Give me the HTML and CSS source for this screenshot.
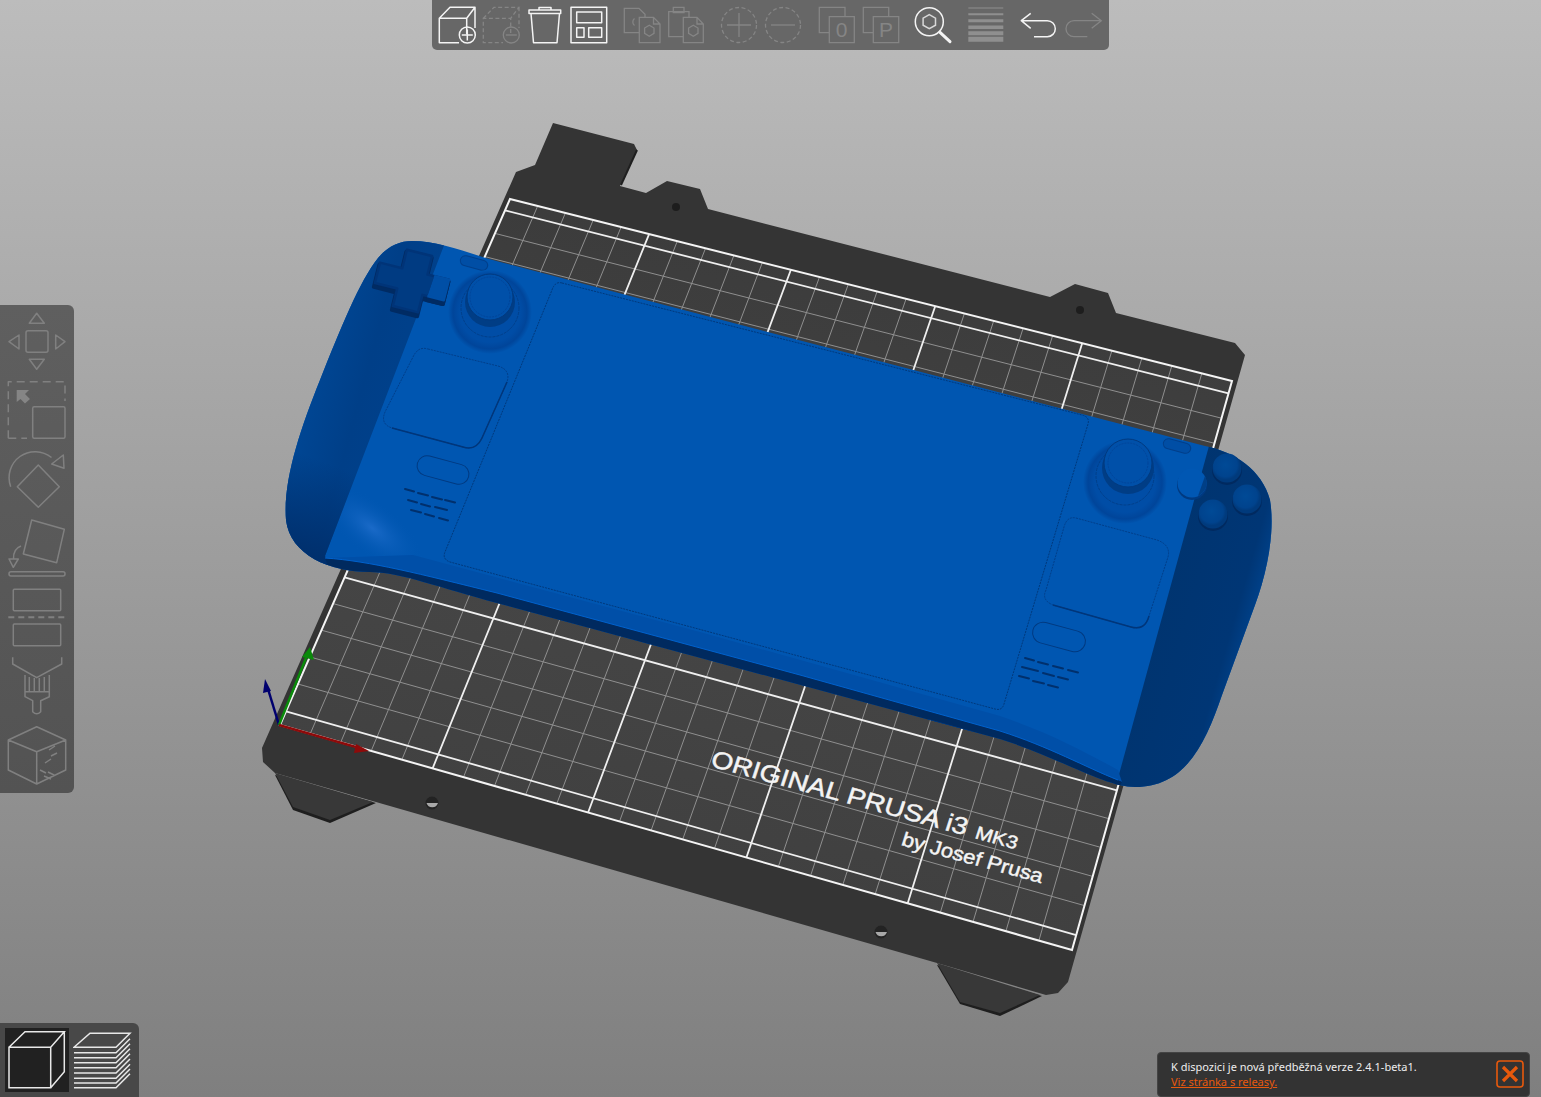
FILE: index.html
```html
<!DOCTYPE html>
<html lang="cs">
<head>
<meta charset="utf-8">
<title>PrusaSlicer</title>
<link rel="stylesheet" href="styles.css">
</head>
<body>
<main class="app">
  <svg class="scene" viewBox="0 0 1541 1097" width="1541" height="1097">
    <defs>
      <clipPath id="bodyClip"><path d="M412 241C440 241 470 254 500 262L1205 446C1235 452 1262 470 1270 500C1275 530 1268 570 1255 605L1222 695C1205 745 1185 787 1135 787C1105 787 1060 758 1000 739L697 657L497 603C440 588 400 572 370 572C330 572 290 555 286 520C283 480 300 430 320 380C340 330 360 280 378 258C388 246 400 241 412 241Z"/></clipPath>
      <clipPath id="faceClip"><polygon points="448,235 1212,435 1112,800 325,600"/></clipPath>
      <linearGradient id="gridFill" gradientUnits="userSpaceOnUse" x1="800" y1="250" x2="700" y2="880">
        <stop offset="0" stop-color="#3c3c3c"/><stop offset="0.6" stop-color="#454545"/><stop offset="1" stop-color="#404040"/>
      </linearGradient>
      <linearGradient id="leftGrip" gradientUnits="userSpaceOnUse" x1="300" y1="400" x2="410" y2="430">
        <stop offset="0" stop-color="#004795"/><stop offset="0.5" stop-color="#003f88"/><stop offset="1" stop-color="#00418c"/>
      </linearGradient>
      <linearGradient id="leftShade" gradientUnits="userSpaceOnUse" x1="345" y1="470" x2="310" y2="560">
        <stop offset="0" stop-color="#002f6c" stop-opacity="0"/><stop offset="1" stop-color="#002f6c"/>
      </linearGradient>
      <linearGradient id="rightGrip" gradientUnits="userSpaceOnUse" x1="1150" y1="590" x2="1272" y2="625">
        <stop offset="0" stop-color="#00346f"/><stop offset="0.7" stop-color="#003675"/><stop offset="1" stop-color="#004c9e"/>
      </linearGradient>
      <radialGradient id="glow">
        <stop offset="0" stop-color="#1a6ac8"/><stop offset="1" stop-color="#0056b1" stop-opacity="0"/>
      </radialGradient>
      <radialGradient id="stickBase">
        <stop offset="0" stop-color="#004da6"/><stop offset="0.72" stop-color="#004da6"/><stop offset="0.88" stop-color="#00459a"/><stop offset="1" stop-color="#0056b1"/>
      </radialGradient>
      <radialGradient id="btnFill" cx="0.45" cy="0.4">
        <stop offset="0" stop-color="#004a96"/><stop offset="0.8" stop-color="#00438d"/><stop offset="1" stop-color="#003a7c"/>
      </radialGradient>
    </defs>

    <!-- print bed -->
    <polygon class="bed-foot-edge" points="293,810 330,823 376,803 275,775"/>
    <polygon class="bed-foot-edge" points="960,1004 1000,1016 1042,996 937,965"/>
    <polygon class="bed-foot" points="275,773 293,807 330,820 373,802"/>
    <polygon class="bed-foot" points="937,963 960,1002 1000,1013 1040,995"/>
    <polygon class="bed" points="553,123 634,144 637,150 620,186 646,193 667,181 700,189 708,209 1050,297 1075,284 1108,293 1116,313 1235,343 1245,355 1068,982 1058,993 1046,995 937,963 275,773 263,762 262,748 516,172 535,165"/>
    <line class="edge-shadow" x1="637" y1="150" x2="621" y2="185"/>
    <circle class="hole-dark" cx="676" cy="207" r="4"/>
    <circle class="hole-dark" cx="1080" cy="310" r="4"/>
    <circle class="hole-ring" cx="432" cy="803" r="6.5"/><path class="hole-in" d="M426.500 803A6 6 0 0 0 438 803Z"/>
    <circle class="hole-ring" cx="881" cy="932" r="6.500"/><path class="hole-in" d="M875.500 932A6 6 0 0 0 887 932Z"/>

    <polygon class="grid-fill" points="510,199 1232,381 1072,950 280,725"/>
    <path class="grid-thin" d="M537.700 206L310.300 733.600M565.400 213L340.700 742.300M593.200 220L371.200 750.900M621.100 227L401.900 759.600M677.300 241.200L463.500 777.100M705.500 248.300L494.500 785.900M733.900 255.400L525.600 794.800M762.300 262.600L556.800 803.600M819.500 277L619.500 821.500M848.300 284.300L651.100 830.400M877.100 291.500L682.700 839.400M906.100 298.800L714.500 848.400M964.400 313.500L778.400 866.600M993.700 320.900L810.600 875.700M1023.100 328.300L842.800 884.900M1052.600 335.800L875.200 894.100M1111.900 350.700L940.300 912.600M1141.800 358.300L973 921.900M1171.800 365.800L1005.900 931.200M1201.800 373.400L1038.900 940.600"/>
    <path class="grid-thin" d="M297.900 684L1084.500 905.600M309.800 656.900L1092.700 876.400M321.500 630.200L1100.800 847.400M333.100 603.600L1108.900 818.700M356 551.300L1124.800 762.100M367.200 525.500L1132.700 734.200M378.400 499.900L1140.500 706.500M389.500 474.600L1148.200 679.100M411.400 424.600L1163.400 625.100M422.100 399.900L1170.900 598.400M432.800 375.500L1178.300 572M443.400 351.300L1185.700 545.700M464.300 303.500L1200.200 494.100M474.600 279.900L1207.400 468.500M484.800 256.600L1214.500 443.300M495 233.400L1221.500 418.200"/>
    <path class="grid-thick" d="M649.100 234.100L432.600 768.400M790.900 269.800L588.100 812.500M935.200 306.200L746.400 857.500M1082.200 343.200L907.700 903.300M286 711.300L1076.200 935.100M344.600 577.400L1116.900 790.300M400.500 449.500L1155.800 651.900M453.900 327.300L1193 519.800M505 210.400L1228.500 393.300"/>
    <polygon class="grid-border" points="510,199 1232,381 1072,950 280,725"/>

    <text class="bed-label" transform="matrix(.965 .262 -.27 .82 709.500 766)" font-size="28">ORIGINAL PRUSA i3</text>
    <text class="bed-label" transform="matrix(.965 .262 -.27 .82 974 838)" font-size="21">MK3</text>
    <text class="bed-label" transform="matrix(.965 .262 -.27 .86 900.500 845)" font-size="22">by Josef Prusa</text>

    <!-- axes -->
    <g class="axis axis-z"><line x1="279" y1="725" x2="268" y2="689"/><polygon points="265,679 271,691 263,693"/></g>
    <g class="axis axis-y"><line x1="279" y1="725" x2="306" y2="658"/><polygon points="310,647 314,660 302,657"/></g>
    <g class="axis axis-x"><line x1="279" y1="725" x2="356" y2="747"/><polygon points="369,751 354,753 356,744"/></g>

    <!-- handheld console -->
    <g clip-path="url(#bodyClip)">
      <rect class="face" x="270" y="230" width="1020" height="570"/>
      <ellipse class="face-glow" cx="372" cy="528" rx="62" ry="26" transform="rotate(38 372 528)"/>
      <polygon class="grip-left" points="448,235 325,556 340,600 270,600 270,235"/>
      <polygon class="grip-shade" points="448,235 325,556 340,600 270,600 270,235"/>
      <polygon class="grip-right" points="1212,435 1112,800 1290,800 1290,435"/>
      <path class="rim" d="M413 555L700 632L1000 716C1050 733 1085 752 1118 770L1122 782L1000 731L497 593C440 578 380 562 325 558Z"/>
      <path class="rim-dark" d="M325 558C370 561 420 574 497 593L800 675L1000 731C1050 747 1085 767 1122 782L1112 800L340 600Z"/>
      <path class="rim-line" d="M325 558C370 561 420 574 497 593L800 675L1000 731C1050 747 1085 767 1118 780"/>
      <path class="usb" d="M928 719L972 731L970 735L926 723Z"/>
    </g>
    <path class="screen" d="M562 283L1082 415Q1090 417 1088 424L1004 704Q1002 711 995 709L450 562Q442 559 445 552L552 290Q555 281 562 283Z"/>

    <g transform="translate(412 283) rotate(14)">
      <path class="dpad-shadow" d="M-13 -29H13V-10H35V13H13V31H-13V13H-36V-10H-13Z"/>
      <path class="dpad" d="M-13 -31H13V-12H35V9H13V27H-13V9H-36V-12H-13Z"/>
    </g>
    <g clip-path="url(#faceClip)">
      <g transform="translate(412 283) rotate(14)">
        <path class="dpad-shadow" d="M-13 -29H13V-10H35V13H13V31H-13V13H-36V-10H-13Z"/>
        <path class="dpad-lit" d="M-13 -31H13V-12H35V9H13V27H-13V9H-36V-12H-13Z"/>
      </g>
    </g>

    <rect class="pill-small" x="-14" y="-5" width="28" height="10" rx="5" transform="translate(474 263) rotate(15)"/>
    <rect class="pill-small" x="-14" y="-5" width="28" height="10" rx="5" transform="translate(1177 446) rotate(15)"/>

    <circle cx="490" cy="312" r="42" fill="url(#stickBase)"/>
    <circle class="stick-ring" cx="490" cy="308" r="29"/>
    <circle class="stick-neck" cx="490" cy="302" r="25"/>
    <circle class="stick-cap" cx="490" cy="297" r="23"/>
    <circle class="stick-inner" cx="490" cy="297" r="20"/>
    <circle cx="1125" cy="482" r="42" fill="url(#stickBase)"/>
    <circle class="stick-ring" cx="1125" cy="476" r="29"/>
    <circle class="stick-neck" cx="1128" cy="468" r="26"/>
    <circle class="stick-cap" cx="1128" cy="463" r="24"/>
    <circle class="stick-inner" cx="1128" cy="463" r="20"/>

    <path class="pad" d="M428 349L498 366Q511 370 507 382L482 438Q476 451 463 447L392 428Q380 424 385 412L413 357Q418 346 428 349Z"/>
    <path class="pad-lit" d="M392 428L463 447Q476 451 482 438L507 382"/>
    <path class="pad" d="M1076 518L1157 540Q1171 545 1168 557L1149 616Q1145 631 1131 627L1053 605Q1041 600 1046 590L1064 527Q1067 516 1076 518Z"/>
    <path class="pad-lit" d="M1053 605L1131 627Q1145 631 1149 616"/>

    <rect class="pill" x="-26.500" y="-10" width="53" height="20" rx="10" transform="translate(443 470) rotate(15)"/>
    <rect class="pill" x="-27" y="-10.500" width="54" height="21" rx="10.500" transform="translate(1059 637) rotate(15)"/>

    <path class="speaker" d="M405 489l9 2.500M418 493l10 2.500M432 497l10 2.500M445 500l10 2.500M408 500l9 2.500M421 504l9 2.500M435 507l12 3M411 510l10 2.500M425 514l9 2.500M439 518l9 2.500"/>
    <path class="speaker" d="M1025 658l9 2.500M1038 662l10 2.500M1053 666l10 2.500M1068 670l10 2.500M1022 667l16 4M1043 673l11 3M1058 677l10 2.500M1019 676l10 2.500M1033 681l11 2.500M1048 685l10 2.500"/>

    <circle class="btn-under" cx="1227" cy="470" r="15"/><circle cx="1227" cy="468" r="14.500" fill="url(#btnFill)"/>
    <circle class="btn-under" cx="1247" cy="501" r="15"/><circle cx="1247" cy="499" r="14.500" fill="url(#btnFill)"/>
    <circle class="btn-under" cx="1213" cy="516" r="15"/><circle cx="1213" cy="514" r="14.500" fill="url(#btnFill)"/>
    <circle class="btn-under-lit" cx="1192" cy="485" r="15"/><circle class="btn-lit" cx="1192" cy="483" r="14.500"/>
    <path class="btn-shade" d="M1205 476A14.500 14.500 0 0 1 1198 496Z"/>
  </svg>

  <nav class="top-bar" aria-label="Nástroje">
    <div class="tool-group">
      <svg class="tool" viewBox="0 0 40 40"><path class="ic" d="M29.700 29V13.300H2.300V37.700H22M2.300 13.300L13 2.300H38L29.700 13.300M38 2.300V23"/><circle class="ic" cx="30.300" cy="30" r="8"/><path class="ic" d="M30.300 24.500V35.500M24.800 30H35.800"/></svg>
      <svg class="tool" viewBox="0 0 40 40"><path class="ic-dim dash" d="M29.700 28V13.300H2.300V37.700H22M2.300 13.300L13 2.300H38L29.700 13.300M38 2.300V23"/><circle class="ic-dim" cx="30.300" cy="30" r="8"/><path class="ic-dim" d="M24.800 30H35.800"/></svg>
      <svg class="tool" viewBox="0 0 40 40"><path class="ic" d="M6 8.500L8.500 37.700H32L34.500 8.500M4 8.500H35.700V5H4ZM14 5V2.500H26V5"/></svg>
      <svg class="tool" viewBox="0 0 40 40"><path class="ic" d="M2 2.300H37.700V37.700H2ZM7.700 7H32.700V17.700H7.700ZM7.700 22.700H15V32.300H7.700ZM19.700 22.700H32.700V32.300H19.700Z"/></svg>
    </div>
    <div class="tool-group">
      <svg class="tool" viewBox="0 0 40 40"><path class="ic-dim" d="M17 27.700H2.300V3.300H17L23 9.300V12M12.500 13.500A4.500 4.500 0 0 0 12.500 20.500M17.300 12.300H31.500L38 19V37.700H17.300ZM31.500 12.300V19H38M27.300 20.200L32 23V28.400L27.300 31.200L22.600 28.400V23Z"/></svg>
      <svg class="tool" viewBox="0 0 40 40"><path class="ic-dim" d="M17 31.700H2.700V6.700H23V12M7.300 2.300H18V7.700H7.300ZM17.300 12.300H31L37.300 19V37.700H17.300ZM31 12.300V19H37.300M27.300 20.200L32 23V28.400L27.300 31.200L22.600 28.400V23Z"/></svg>
    </div>
    <div class="tool-group">
      <svg class="tool" viewBox="0 0 40 40"><circle class="ic-dim dash" cx="20" cy="20" r="17.500"/><path class="ic-dim" d="M20 8V32M8 20H32"/></svg>
      <svg class="tool" viewBox="0 0 40 40"><circle class="ic-dim dash" cx="20" cy="20" r="17.500"/><path class="ic-dim" d="M8 20H32"/></svg>
    </div>
    <div class="tool-group">
      <svg class="tool" viewBox="0 0 40 40"><path class="ic-dim" d="M13.300 27.700H3.300V2.300H29V11.700M13.300 11.700H38.300V37.700H13.300Z"/><text class="tool-letter" x="25.500" y="31.500">0</text></svg>
      <svg class="tool" viewBox="0 0 40 40"><path class="ic-dim" d="M13.300 27.700H3.300V2.300H28.700V11.700M13.300 11.700H38.700V37.700H13.300Z"/><text class="tool-letter" x="26" y="31.500">P</text></svg>
    </div>
    <div class="tool-group">
      <svg class="tool" viewBox="0 0 40 40"><circle class="ic" cx="16.300" cy="16.700" r="14"/><path class="ic-hex" d="M16.300 9.700L22.500 13.200V20.200L16.300 23.700L10.100 20.200V13.200Z"/><path class="ic-handle" d="M27 27.300L37 36.700"/></svg>
    </div>
    <div class="tool-group">
      <svg class="tool" viewBox="0 0 40 40"><path class="layer l1" d="M2.300 3H37.300"/><path class="layer l2" d="M2.300 9.300H37.300"/><path class="layer l3" d="M2.300 15.700H37.300"/><path class="layer l4" d="M2.300 22.300H37.300"/><path class="layer l5" d="M2.300 28.300H37.300"/><path class="layer l6" d="M2.300 34.300H37.300"/></svg>
    </div>
    <div class="tool-group">
      <svg class="tool" viewBox="0 0 40 40"><path class="ic" d="M11.700 8.300L2.300 15.700L11.700 23.300M2.300 15.700H28.300A8 8 0 0 1 28.300 31.700H15"/></svg>
      <svg class="tool" viewBox="0 0 40 40"><path class="ic-dim" d="M28.700 8.300L38.300 15.700L28.700 23.300M38.300 15.700H11A8 8 0 0 0 11 31.700H24.300"/></svg>
    </div>
  </nav>

  <nav class="side-bar" aria-label="Gizma">
    <svg class="gizmo" viewBox="0 0 60 60"><path class="gz" d="M21 18.700H39Q41 18.700 41 20.700V38.300Q41 40.300 39 40.300H21Q19 40.300 19 38.300V20.700Q19 18.700 21 18.700ZM29.700 1.300L22.300 11.300H37.300ZM2 29.700L12 23V37ZM58 29.700L48.700 23V37ZM29.700 57.300L22.300 47.300H37.300Z"/></svg>
    <svg class="gizmo" viewBox="0 0 60 60"><path class="gz dash-long" d="M1.300 57.300V0.700H58V20M1.300 57.300H20"/><rect class="gz" x="25.700" y="25.700" width="32.300" height="31.600" rx="1.500"/><polygon class="gz-fill" points="9.700,9 22,9 18,13 23,18 18,22.500 13.500,18 9.700,21"/></svg>
    <svg class="gizmo" viewBox="0 0 60 60"><path class="gz" d="M3.700 36.700A26 26 0 0 1 44.500 7.500M56.300 5L57 18.300L44.700 14ZM31.300 15L52.300 36.700L31.300 57.300L10.300 36.700Z"/></svg>
    <svg class="gizmo" viewBox="0 0 60 60"><path class="gz" d="M24.700 1L57.300 10.300L49.700 43.700L16.300 35ZM14 27Q6 30 6.500 40M2 40H11.300L6.300 48.300Z"/><rect class="gz" x="2" y="52.700" width="56" height="4.300" rx="2"/></svg>
    <svg class="gizmo" viewBox="0 0 60 60"><rect class="gz" x="6.300" y="1.300" width="47.400" height="21.400" rx="1"/><path class="gz dash-cut" d="M1.300 29.300H58"/><rect class="gz" x="6.300" y="36" width="47.400" height="21.700" rx="1"/></svg>
    <svg class="gizmo" viewBox="0 0 60 60"><path class="gz" d="M5.700 0.300V7L29.700 20.700L54.700 7V0.300M18 18V39.700L25.700 43.700V54.700Q29.700 59 33.700 54.700V43.700L42.300 39.700V18M18 34.700H42.300M22.300 20V34.700M27.300 21V34.700M32.300 21V34.700M37.300 20V34.700"/></svg>
    <svg class="gizmo" viewBox="0 0 60 60"><path class="gz" d="M29.700 0.700L58.700 14L29.700 25.700L1.300 14ZM1.300 14V44L29.700 58L58.700 44V14M29.700 25.700V58M42 24L48 20M44 30L50 27M38 37L44 33M33 44L39 47M37 50L44 53M41 46L47 49"/></svg>
  </nav>

  <nav class="view-bar" aria-label="Zobrazení">
    <svg class="view view-active" viewBox="0 0 64 64"><path class="vw" d="M4 19.300H45.700V59.700H4ZM4 19.300L20 3.700H59.300L45.700 19.300M59.300 3.700V43.700L45.700 59.700"/></svg>
    <svg class="view" viewBox="0 0 64 64"><path class="vw" d="M1 19.300L17 5.300H57L43 19.300ZM1 24.700H43L57 10.700M1 29.700H43L57 15.700M1 34.700H43L57 20.700M1 39.700H43L57 25.700M1 45H43L57 31M1 50.300H43L57 36.300M1 55H43L57 41M1 59.700H43L57 45.700"/></svg>
  </nav>

  <aside class="notice">
    <div class="notice-text">
      <p class="notice-line">K dispozici je nová předběžná verze 2.4.1-beta1.</p>
      <a class="notice-link" href="#">Viz stránka s releasy.</a>
    </div>
    <svg class="notice-close" viewBox="0 0 28 28"><rect class="close-box" x="1" y="1" width="26" height="26" rx="3"/><path class="close-x" d="M7 7L21 21M21 7L7 21"/></svg>
  </aside>
</main>
</body>
</html>
```

FILE: styles.css
```css
* { box-sizing: border-box; }
html, body { margin: 0; height: 100%; overflow: hidden; }
body { background: #808080; }

.app {
  position: relative;
  width: 1541px;
  height: 1097px;
  overflow: hidden;
  background: linear-gradient(180deg, #bcbcbc 0%, #7f7f7f 100%);
  font-family: "Noto Sans", "Liberation Sans", sans-serif;
}
.scene { display: block; }

/* bed */
.bed { fill: #343434; }
.bed-foot { fill: #383838; }
.bed-foot-edge { fill: #1e1e1e; }
.edge-shadow { stroke: #1f1f1f; stroke-width: 2; }
.hole-dark { fill: #1d1d1d; }
.hole-ring { fill: #232323; }
.hole-in { fill: #a8a8a8; }
.grid-fill { fill: url(#gridFill); }
.grid-thin { fill: none; stroke: #8f8f8f; stroke-width: 1; }
.grid-thick { fill: none; stroke: #efefef; stroke-width: 1.8; }
.grid-border { fill: none; stroke: #f4f4f4; stroke-width: 2; }
.bed-label { fill: #f4f4f4; stroke: #f4f4f4; stroke-width: 0.5; font-family: "Liberation Sans", Arial, sans-serif; }

/* axes */
.axis line { stroke-width: 2.5; }
.axis-z line { stroke: #00006e; } .axis-z polygon { fill: #00006e; }
.axis-y line { stroke: #0a8a0a; } .axis-y polygon { fill: #0a8a0a; }
.axis-x line { stroke: #8e0a0a; } .axis-x polygon { fill: #8e0a0a; }

/* console */
.face { fill: #0056b1; }
.face-glow { fill: url(#glow); }
.grip-left { fill: url(#leftGrip); }
.grip-shade { fill: url(#leftShade); }
.grip-right { fill: url(#rightGrip); }
.rim { fill: #004fa8; }
.rim-dark { fill: #002a5f; }
.rim-line { fill: none; stroke: #0062cc; stroke-width: 1; }
.usb { fill: #003a80; }
.screen { fill: none; stroke: #00397c; stroke-width: 1; stroke-dasharray: 2 1; }
.dpad-shadow { fill: #002b63; stroke: #002b63; stroke-width: 4; stroke-linejoin: round; }
.dpad { fill: #003b82; stroke: #003478; stroke-width: 2.5; stroke-linejoin: round; }
.dpad-lit { fill: #004fa6; stroke: #004fa6; stroke-width: 2.5; stroke-linejoin: round; }
.pill-small { fill: #004ea5; stroke: #003f8a; stroke-width: 1; }
.stick-ring { fill: none; stroke: #003f8a; stroke-width: 1; stroke-dasharray: 3 1; }
.stick-neck { fill: #003d85; }
.stick-cap { fill: #0050a9; stroke: #003a80; stroke-width: 1; }
.stick-inner { fill: none; stroke: #00459a; stroke-width: 1; stroke-dasharray: 2 1; }
.pad { fill: #0056b1; stroke: #003f8a; stroke-width: 1; stroke-dasharray: 2 1; }
.pad-lit { fill: none; stroke: #00367a; stroke-width: 1.5; }
.pill { fill: #0056b1; stroke: #003a80; stroke-width: 1; }
.speaker { fill: none; stroke: #00306d; stroke-width: 2; stroke-linecap: round; }
.btn-under { fill: #002a60; }
.btn-under-lit { fill: #003a80; }
.btn-lit { fill: #0057b3; }
.btn-shade { fill: #003f86; }

/* top toolbar */
.top-bar {
  position: absolute;
  top: 0;
  left: 432px;
  width: 677px;
  height: 50px;
  padding: 5px;
  display: flex;
  gap: 13px;
  background: #676767;
  border-radius: 0 0 5px 5px;
}
.tool-group { display: flex; gap: 4px; }
.tool { width: 40px; height: 40px; flex: none; }
.ic { fill: none; stroke: #f4f4f4; stroke-width: 1.5; stroke-linejoin: round; }
.ic-hex { fill: none; stroke: #d8d8d8; stroke-width: 1.5; }
.ic-handle { fill: none; stroke: #f4f4f4; stroke-width: 3; stroke-linecap: round; }
.ic-dim { fill: none; stroke: #858585; stroke-width: 1.3; }
.dash { stroke-dasharray: 4 2.500; }
.tool-letter { fill: #858585; font-family: "Liberation Sans", sans-serif; font-size: 21px; text-anchor: middle; }
.layer { stroke: #8f8f8f; }
.l1 { stroke-width: 1.2; } .l2 { stroke-width: 2; } .l3 { stroke-width: 3; }
.l4 { stroke-width: 3.500; } .l5 { stroke-width: 4; } .l6 { stroke-width: 5; }

/* left toolbar */
.side-bar {
  position: absolute;
  top: 305px;
  left: 0;
  width: 74px;
  height: 488px;
  padding: 7px;
  display: flex;
  flex-direction: column;
  gap: 9px;
  background: linear-gradient(180deg, #5f5f5f, #535353);
  border-radius: 0 6px 6px 0;
}
.gizmo { width: 60px; height: 60px; flex: none; overflow: visible; }
.gz { fill: none; stroke: #808080; stroke-width: 1.5; stroke-linejoin: round; }
.gz-fill { fill: #858585; }
.dash-long { stroke-dasharray: 8 5; }
.dash-cut { stroke-dasharray: 6 4; stroke-width: 2; }

/* view switch */
.view-bar {
  position: absolute;
  left: 0;
  bottom: 0;
  width: 139px;
  height: 74px;
  padding: 5px;
  display: flex;
  gap: 4px;
  background: #484848;
  border-radius: 0 6px 0 0;
}
.view { width: 64px; height: 64px; flex: none; }
.view-active { background: #212121; }
.vw { fill: none; stroke: #e8e8e8; stroke-width: 1.5; }

/* notification */
.notice {
  position: absolute;
  left: 1157px;
  top: 1052px;
  width: 373px;
  height: 45px;
  padding: 6px 5px 0 13px;
  display: flex;
  justify-content: space-between;
  align-items: flex-start;
  background: #333;
  border: 1px solid #444;
  border-radius: 4px;
  color: #eee;
  font-size: 11px;
  line-height: 15px;
}
.notice-line { margin: 0; }
.notice-link { color: #e8590c; text-decoration: underline; }
.notice-close { width: 28px; height: 28px; flex: none; margin-top: 1px; }
.close-box { fill: none; stroke: #e8590c; stroke-width: 1.6; }
.close-x { fill: none; stroke: #e8590c; stroke-width: 3.200; }
```
